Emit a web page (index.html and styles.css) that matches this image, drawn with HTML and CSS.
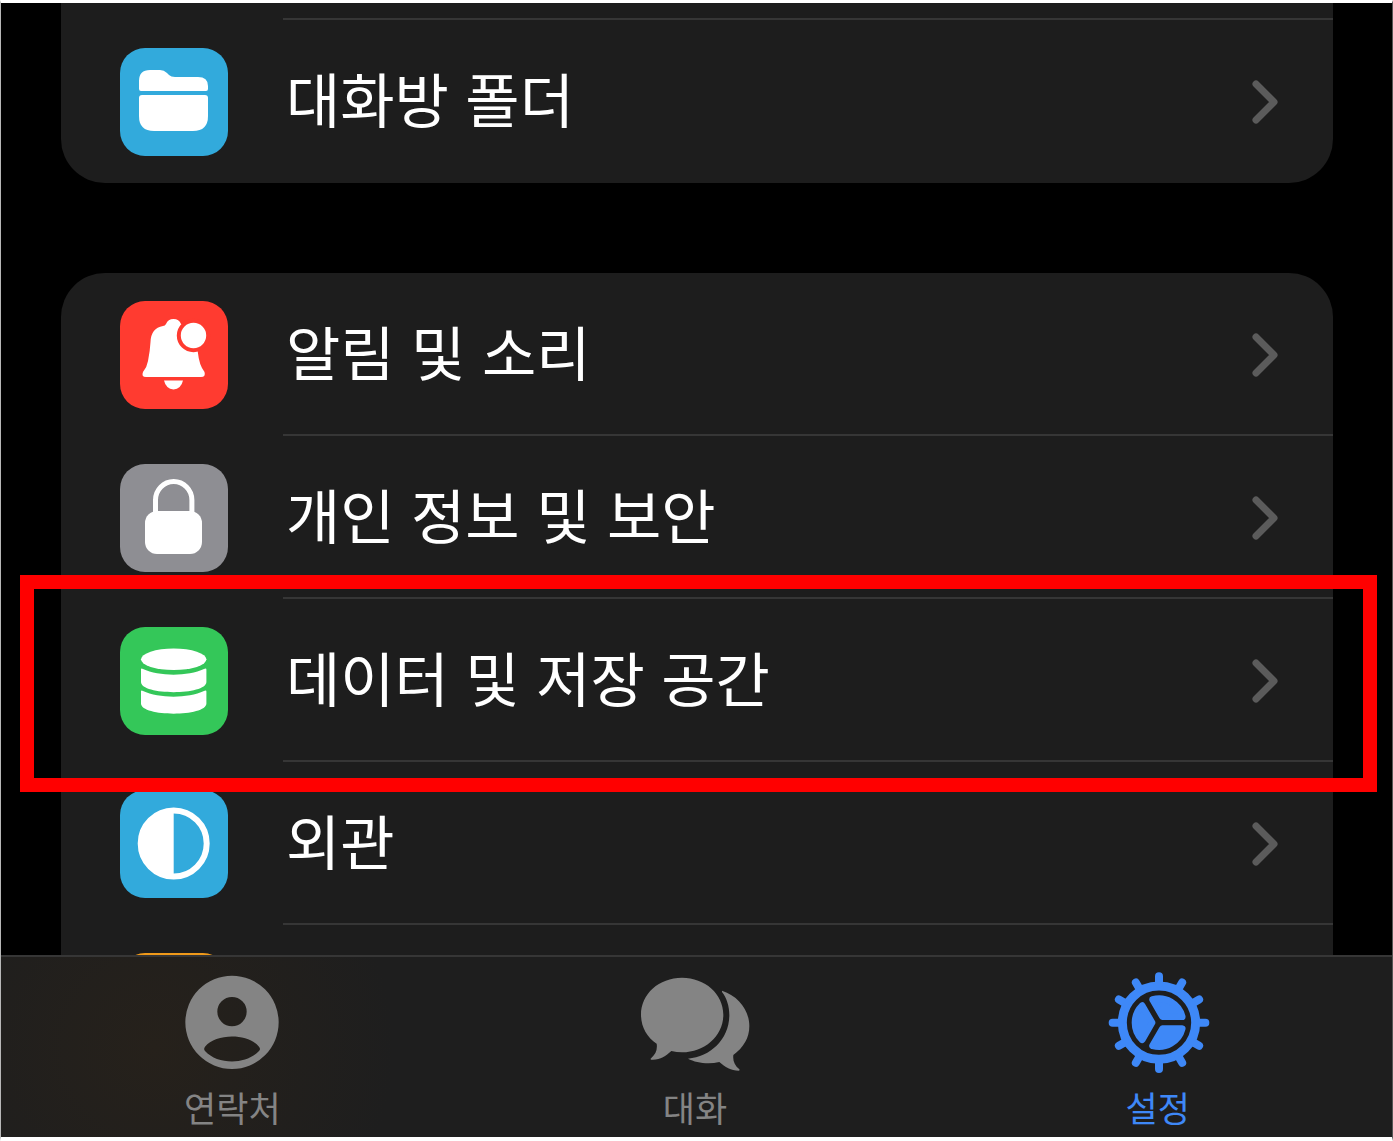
FILE: index.html
```html
<!DOCTYPE html>
<html lang="ko">
<head>
<meta charset="utf-8">
<meta name="viewport" content="width=device-width, initial-scale=1">
<title>설정</title>
<link rel="stylesheet" href="styles.css">
</head>
<body>
<svg class="defs" aria-hidden="true">
  <symbol id="chevron" viewBox="0 0 28 46">
    <path d="M5 5 L23 23 L5 41" fill="none" stroke="currentColor" stroke-width="7" stroke-linecap="round" stroke-linejoin="round"/>
  </symbol>
</svg>
<div class="app">
  <main class="settings">
    <section class="card card-scrolled">
      <div class="row-rest"></div>
      <a class="row" href="#folders">
        <svg class="icon icon-blue" viewBox="0 0 108 108" aria-hidden="true">
          <path fill="#fff" d="M19 41V33Q19 22 30 22H40Q44 22 47 25L49 27Q51 29 55 29H78Q88 29 88 38V41Q88 43 86 43H21Q19 43 19 41Z"/>
          <path fill="#fff" d="M22 47H85Q88 47 88 50V68Q88 83 73 83H34Q19 83 19 68V50Q19 47 22 47Z"/>
        </svg>
        <span class="row-body"><span class="label">대화방 폴더</span><svg class="chevron" aria-hidden="true"><use href="#chevron"/></svg></span>
      </a>
    </section>

    <section class="card">
      <a class="row" href="#notifications">
        <svg class="icon icon-red" viewBox="0 0 108 108" aria-hidden="true">
          <path fill="#fff" d="M46 23Q48 18 53.500 18Q59 18 61 23Q75 27 77 42Q78 60 82 67L84.500 71Q86 76 81 76H26Q21 76 23 71Q27 66 28 60Q30 50 30.500 41Q31 27 43 25Q45 25 46 23Z"/>
          <path fill="#fff" d="M44 79.500H63Q61 88 53.500 88.500Q46 88 44 79.500Z"/>
          <circle cx="73.500" cy="34.500" r="14.700" fill="#fff" stroke="#ff3b30" stroke-width="4"/>
        </svg>
        <span class="row-body"><span class="label">알림 및 소리</span><svg class="chevron" aria-hidden="true"><use href="#chevron"/></svg></span>
      </a>
      <a class="row" href="#privacy">
        <svg class="icon icon-gray" viewBox="0 0 108 108" aria-hidden="true">
          <path d="M35.500 50V36A18.200 18.500 0 0 1 71.900 36V50" fill="none" stroke="#fff" stroke-width="5"/>
          <rect x="25" y="47" width="57" height="43" rx="12" fill="#fff"/>
        </svg>
        <span class="row-body"><span class="label">개인 정보 및 보안</span><svg class="chevron" aria-hidden="true"><use href="#chevron"/></svg></span>
      </a>
      <a class="row row-marked" href="#data">
        <svg class="icon icon-green" viewBox="0 0 108 108" aria-hidden="true">
          <g fill="#fff">
            <ellipse cx="53.700" cy="32.300" rx="32.700" ry="10.800"/>
            <path d="M21 42.500Q21 41 23 42C39 49.500 68 49.500 84 42Q86.400 41 86.400 42.500V55C86.400 68.500 21 68.500 21 55Z"/>
            <path d="M21 64.500Q21 63 23 64C39 71.500 68 71.500 84 64Q86.400 63 86.400 64.500V76.500C86.400 90 21 90 21 76.500Z"/>
          </g>
        </svg>
        <span class="row-body"><span class="label">데이터 및 저장 공간</span><svg class="chevron" aria-hidden="true"><use href="#chevron"/></svg></span>
      </a>
      <a class="row" href="#appearance">
        <svg class="icon icon-blue" viewBox="0 0 108 108" aria-hidden="true">
          <circle cx="53.700" cy="53.500" r="33" fill="none" stroke="#fff" stroke-width="6"/>
          <path d="M53.700 18.500A35 35 0 0 0 53.700 88.500Z" fill="#fff"/>
        </svg>
        <span class="row-body"><span class="label">외관</span><svg class="chevron" aria-hidden="true"><use href="#chevron"/></svg></span>
      </a>
      <div class="row">
        <svg class="icon icon-orange" viewBox="0 0 108 108" aria-hidden="true"></svg>
        <span class="row-body"></span>
      </div>
    </section>
  </main>

  <nav class="tabs">
    <a class="tab" href="#contacts">
      <svg class="tab-icon" viewBox="78 50 330 330" aria-hidden="true">
        <path fill="currentColor" fill-rule="evenodd" d="M243 76A140 140 0 1 0 243 356A140 140 0 1 0 243 76ZM243 140A44 44 0 1 1 243 228A44 44 0 1 1 243 140ZM162 289C195 248 291 248 324 289Q330 296 324 302C286 344 200 344 162 302Q157 296 162 289Z"/>
      </svg>
      <span>연락처</span>
    </a>
    <a class="tab" href="#chats">
      <svg class="tab-icon" viewBox="90 50 330 330" aria-hidden="true">
        <g fill="currentColor">
          <path d="M216 82C285 82 340 131 340 193C340 256 285 306 216 306Q200 306 184 302C166 319 149 330 123 328Q120 326 124 323C136 313 143 300 140 280C111 261 93 230 93 193C93 131 147 82 216 82Z"/>
          <path d="M336 121C386 137 418 181 418 227C418 263 401 291 370 314C368 332 374 345 388 357Q390 360 386 361C363 361 345 350 328 335C294 343 257 337 234 325C302 319 358 266 358 194C358 167 350 143 336 125Z"/>
        </g>
      </svg>
      <span>대화</span>
    </a>
    <a class="tab tab-active" href="#settings" aria-current="page">
      <svg class="tab-icon" viewBox="-168 -167 330 330" aria-hidden="true">
        <circle r="110" fill="none" stroke="currentColor" stroke-width="27"/>
        <g stroke="currentColor" stroke-width="24" stroke-linecap="round">
          <path d="M0-118V-139M0 118V139M118 0H139M-118 0H-139"/>
          <path d="M0-118V-139M0 118V139M118 0H139M-118 0H-139" transform="rotate(30)"/>
          <path d="M0-118V-139M0 118V139M118 0H139M-118 0H-139" transform="rotate(60)"/>
        </g>
        <g fill="currentColor" stroke="currentColor" stroke-width="20" stroke-linejoin="round">
          <path d="M10.400-18L69.700-18A72 72 0 0 0-19.200-69.400Z"/>
          <path d="M10.400-18L69.700-18A72 72 0 0 0-19.200-69.400Z" transform="rotate(120)"/>
          <path d="M10.400-18L69.700-18A72 72 0 0 0-19.200-69.400Z" transform="rotate(240)"/>
        </g>
      </svg>
      <span>설정</span>
    </a>
  </nav>
</div>
</body>
</html>
```
FILE: styles.css
```css
* {
  box-sizing: border-box;
}

body {
  margin: 0;
  background: #fff;
  font-family: "Noto Sans CJK KR", sans-serif;
}

a {
  color: inherit;
  text-decoration: none;
}

.defs {
  display: none;
}

.app {
  display: flex;
  flex-direction: column;
  height: 100vh;
  border: solid #fff;
  border-width: 3px 1px 4px;
  border-left-color: #b8b8b8;
  border-right-color: #555;
  background: #000;
  color: #fff;
}

.settings {
  display: flex;
  flex: 1;
  flex-direction: column;
  gap: 90px;
  min-height: 0;
  overflow: hidden;
  padding: 0 59px 0 60px;
}

.card {
  flex: none;
  border-radius: 44px;
  background: #1d1d1d;
}

.card-scrolled {
  border-top-left-radius: 0;
  border-top-right-radius: 0;
}

.row-rest {
  height: 17px;
  margin-left: 222px;
  border-bottom: 2px solid #363636;
}

.row {
  position: relative;
  display: flex;
  align-items: center;
  gap: 55px;
  height: 163px;
  padding-left: 59px;
}

.row-body {
  display: flex;
  flex: 1;
  align-items: center;
  justify-content: space-between;
  align-self: stretch;
  padding: 2px 54px 0 3px;
  border-bottom: 2px solid #363636;
}

.row:last-child .row-body {
  border-bottom-color: transparent;
}

.row-marked::after {
  content: "";
  position: absolute;
  z-index: 1;
  inset: -24px -44px -30px -41px;
  border: 14px solid #f00;
  pointer-events: none;
}

.icon {
  flex: none;
  width: 108px;
  height: 108px;
  border-radius: 25px;
}

.icon-blue {
  background: #32aadc;
}

.icon-red {
  background: #ff3b30;
}

.icon-gray {
  background: #8e8e93;
}

.icon-green {
  background: #34c759;
}

.icon-orange {
  background: #f09a1a;
}

.label {
  padding-bottom: 8px;
  font-size: 59px;
  line-height: 80px;
  white-space: nowrap;
}

.chevron {
  flex: none;
  width: 28px;
  height: 46px;
  color: #5b5b5b;
}

.tabs {
  display: grid;
  flex: none;
  grid-template-columns: repeat(3, 1fr);
  padding-right: 3px;
  border-top: 2px solid #363636;
  background: radial-gradient(circle at 11% 50%, #26211b, #1e1e1e 240px);
  color: #848484;
}

.tab {
  display: flex;
  flex-direction: column;
  align-items: center;
  gap: 8px;
  padding: 10px 0 8px;
  font-size: 35px;
  line-height: 44px;
}

.tab-active {
  color: #3e88f7;
}

.tab-icon {
  width: 110px;
  height: 110px;
}
```
